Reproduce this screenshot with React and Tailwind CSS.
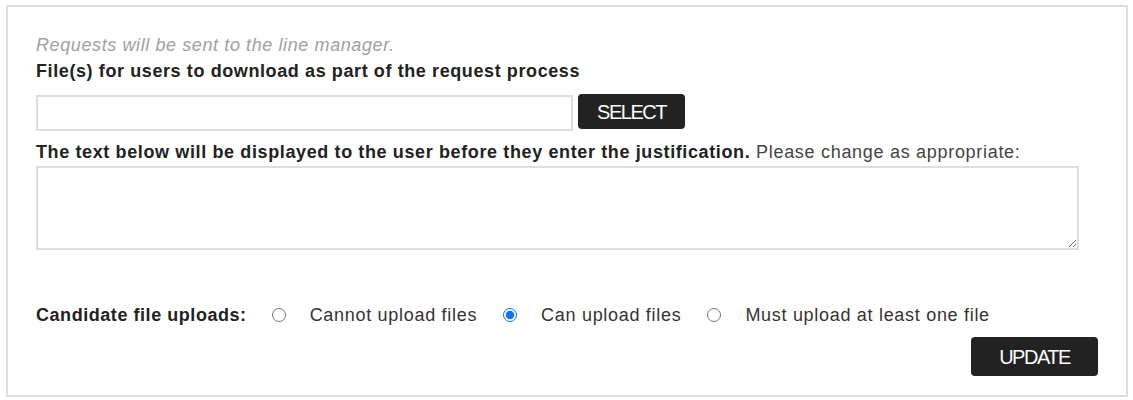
import { useState } from "react";

const App = () => {
    const [uploads, setUploads] = useState("can");

    const options = [
        { value: "cannot", label: "Cannot upload files" },
        { value: "can", label: "Can upload files" },
        { value: "must", label: "Must upload at least one file" },
    ];

    return (
        <div
            className="bg-white pt-[5px] pl-[6px] pr-[5px] h-[400px]"
            style={{ fontFamily: '"Liberation Sans", Arial, sans-serif' }}
        >
            <div className="h-[392px] border-2 border-[#dedede] px-[28px] pt-[25px]">
                <p className="text-[18px] leading-[26px] tracking-[0.6px] italic text-[#a0a0a0]">
                    Requests will be sent to the line manager.
                </p>
                <p className="text-[18px] leading-[26px] tracking-[0.6px] font-bold text-[#222]">
                    File(s) for users to download as part of the request process
                </p>

                {/* file picker */}
                <div className="flex items-start gap-[5px] mt-[11px]">
                    <input
                        type="text"
                        className="w-[537px] h-[36px] border-2 border-[#dedede] bg-white outline-none px-2"
                    />
                    <button
                        type="button"
                        className="-mt-px w-[107px] h-[35px] bg-[#222] text-white rounded-[4px] text-[20px] tracking-[-1.5px]"
                    >
                        SELECT
                    </button>
                </div>

                <p className="mt-[8px] text-[18px] leading-[26px] tracking-[0.7px] text-[#444]">
                    <span className="font-bold text-[#222] tracking-[0.62px]">
                        The text below will be displayed to the user before they enter the justification.
                    </span>{" "}
                    Please change as appropriate:
                </p>
                <textarea className="block mt-[1px] w-[1043px] h-[84px] border-2 border-[#dedede] outline-none p-1" />

                {/* upload rules */}
                <div className="mt-[52px] flex items-center h-[26px] text-[18px] tracking-[0.7px] text-[#333]">
                    <span className="font-bold text-[#222] tracking-[0.55px] mr-[25px]">Candidate file uploads:</span>
                    {options.map((opt) => (
                        <label key={opt.value} className="flex items-center mr-[26px]">
                            <input
                                type="radio"
                                name="uploads"
                                checked={uploads === opt.value}
                                onChange={() => setUploads(opt.value)}
                                className="m-0 w-[14px] h-[14px] accent-[#0a74ff] mr-[24px]"
                            />
                            {opt.label}
                        </label>
                    ))}
                </div>

                <div className="flex justify-end mt-[9px]">
                    <button
                        type="button"
                        className="w-[127px] h-[39px] bg-[#222] text-white rounded-[4px] text-[20px] tracking-[-1.5px]"
                    >
                        UPDATE
                    </button>
                </div>
            </div>
        </div>
    );
};

export default App;
